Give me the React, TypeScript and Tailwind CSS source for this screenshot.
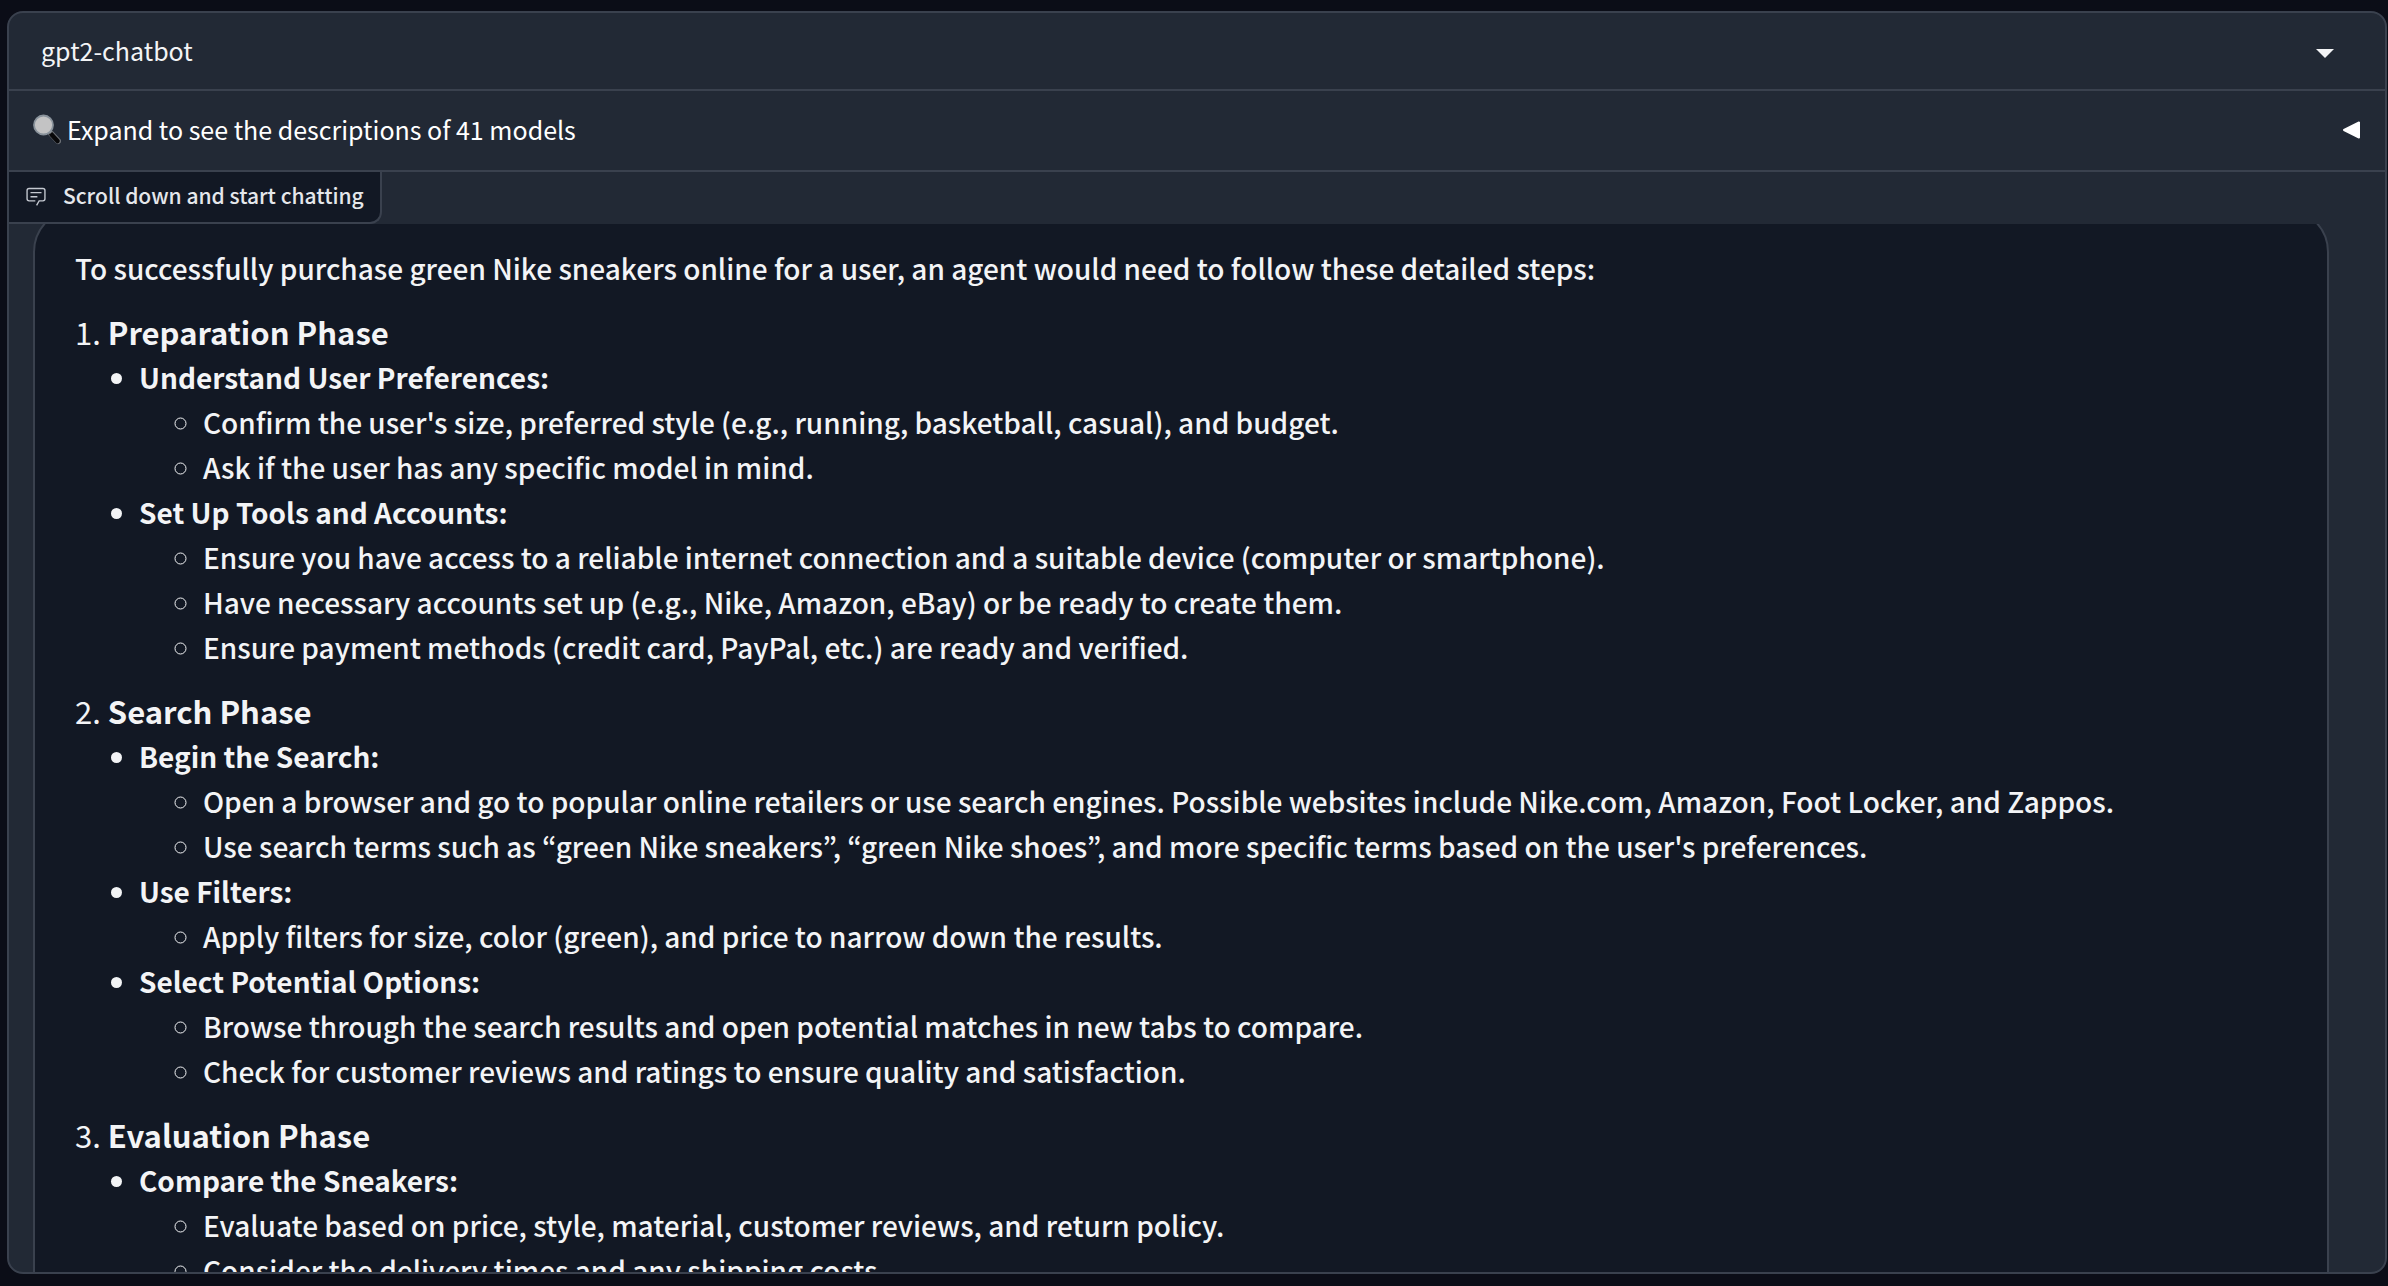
import { useState } from 'react';

const phases = [
  {
    title: 'Preparation Phase',
    groups: [
      {
        name: 'Understand User Preferences:',
        steps: [
          "Confirm the user's size, preferred style (e.g., running, basketball, casual), and budget.",
          'Ask if the user has any specific model in mind.',
        ],
      },
      {
        name: 'Set Up Tools and Accounts:',
        steps: [
          'Ensure you have access to a reliable internet connection and a suitable device (computer or smartphone).',
          'Have necessary accounts set up (e.g., Nike, Amazon, eBay) or be ready to create them.',
          'Ensure payment methods (credit card, PayPal, etc.) are ready and verified.',
        ],
      },
    ],
  },
  {
    title: 'Search Phase',
    groups: [
      {
        name: 'Begin the Search:',
        steps: [
          'Open a browser and go to popular online retailers or use search engines. Possible websites include Nike.com, Amazon, Foot Locker, and Zappos.',
          "Use search terms such as “green Nike sneakers”, “green Nike shoes”, and more specific terms based on the user's preferences.",
        ],
      },
      {
        name: 'Use Filters:',
        steps: ['Apply filters for size, color (green), and price to narrow down the results.'],
      },
      {
        name: 'Select Potential Options:',
        steps: [
          'Browse through the search results and open potential matches in new tabs to compare.',
          'Check for customer reviews and ratings to ensure quality and satisfaction.',
        ],
      },
    ],
  },
  {
    title: 'Evaluation Phase',
    groups: [
      {
        name: 'Compare the Sneakers:',
        steps: [
          'Evaluate based on price, style, material, customer reviews, and return policy.',
          'Consider the delivery times and any shipping costs.',
        ],
      },
    ],
  },
];

function MagnifierIcon() {
  return (
    <svg viewBox="0 0 28 34" className="h-[34px] w-7 shrink-0" aria-hidden="true">
      <path d="M18 20.500L25 28" stroke="#6b6f75" strokeWidth="6" strokeLinecap="round" />
      <path d="M18.500 21.500L24.500 28" stroke="#08080a" strokeWidth="4.500" strokeLinecap="round" />
      <path d="M15 17L18 20" stroke="#8b8f94" strokeWidth="3" />
      <circle cx="10.500" cy="12" r="9.500" fill="#c3c3c4" stroke="#8a939c" strokeWidth="1.800" />
    </svg>
  );
}

function ChatIcon() {
  return (
    <svg viewBox="0 0 32 32" className="h-[22px] w-[22px] shrink-0 text-[#c4c8d0]" fill="currentColor" aria-hidden="true">
      <path d="M17.740 30L16 29l4-7h6a2 2 0 0 0 2-2V8a2 2 0 0 0-2-2H6a2 2 0 0 0-2 2v12a2 2 0 0 0 2 2h9v2H6a4 4 0 0 1-4-4V8a4 4 0 0 1 4-4h20a4 4 0 0 1 4 4v12a4 4 0 0 1-4 4h-4.840Z" />
      <path d="M8 10h16v2H8zM8 16h10v2H8z" />
    </svg>
  );
}

export default function App() {
  const [model, setModel] = useState('gpt2-chatbot');
  const [expanded, setExpanded] = useState(false);

  return (
    <div className="h-screen bg-[#0b0d17] pt-[11px] pr-px pb-3 pl-[7px] font-['Noto_Sans_CJK_KR','Noto_Sans',sans-serif] text-[#f3f4f6]">
      <main className="flex h-full flex-col overflow-hidden rounded-2xl border-2 border-[#3a414e] bg-[#222935]">
        <div className="relative h-[78px] shrink-0 border-b-2 border-[#3a414e]">
          <select
            aria-label="Model"
            value={model}
            onChange={(e) => setModel(e.target.value)}
            className="h-full w-full appearance-none bg-transparent px-8 text-[25px] outline-none"
          >
            <option value="gpt2-chatbot">gpt2-chatbot</option>
          </select>
          <svg viewBox="0 0 18 9" className="pointer-events-none absolute top-[36px] right-[51px] h-[9px] w-[18px]" aria-hidden="true">
            <path d="M0 0h18L9 9z" fill="#f3f4f6" />
          </svg>
        </div>

        <button
          type="button"
          aria-expanded={expanded}
          onClick={() => setExpanded(!expanded)}
          className="flex h-[81px] shrink-0 items-center justify-between border-b-2 border-[#3a414e] pr-6 pb-0.5 pl-6 text-[25px] text-white"
        >
          <span className="flex items-center gap-1.5">
            <MagnifierIcon />
            Expand to see the descriptions of 41 models
          </span>
          <svg viewBox="0 0 18 18" className="h-[18px] w-[18px]" aria-hidden="true">
            <path d="M1 9L16 1.500v15z" fill="white" stroke="white" strokeWidth="2" strokeLinejoin="round" />
          </svg>
        </button>

        <section aria-label="Chat" className="flex min-h-0 grow flex-col">
          <div className="flex h-[52px] shrink-0 items-center gap-4 self-start rounded-br-xl border-r-2 border-b-2 border-[#3a414e] bg-[#121824] pr-4 pb-0.5 pl-4 text-[21px] font-medium text-gray-200">
            <ChatIcon />
            Scroll down and start chatting
          </div>

          <div className="min-h-0 grow overflow-y-auto pr-14 pl-6 [scrollbar-width:none]">
            <article className="-mt-4 rounded-t-[44px] border-2 border-[#3a414e] bg-[#121824] pt-9 pr-10 pb-10 pl-10 text-[28px] leading-[45px] font-medium">
              <p>To successfully purchase green Nike sneakers online for a user, an agent would need to follow these detailed steps:</p>
              {phases.map((phase, i) => (
                <section key={phase.title} className="pt-[18px]">
                  <h3 className="text-[31px] leading-[46px] font-normal">
                    {i + 1}. <strong>{phase.title}</strong>
                  </h3>
                  <ul className="list-disc pl-16">
                    {phase.groups.map((group) => (
                      <li key={group.name}>
                        <strong>{group.name}</strong>
                        <ul className="list-[circle] pl-16">
                          {group.steps.map((step) => (
                            <li key={step}>{step}</li>
                          ))}
                        </ul>
                      </li>
                    ))}
                  </ul>
                </section>
              ))}
            </article>
          </div>
        </section>
      </main>
    </div>
  );
}
